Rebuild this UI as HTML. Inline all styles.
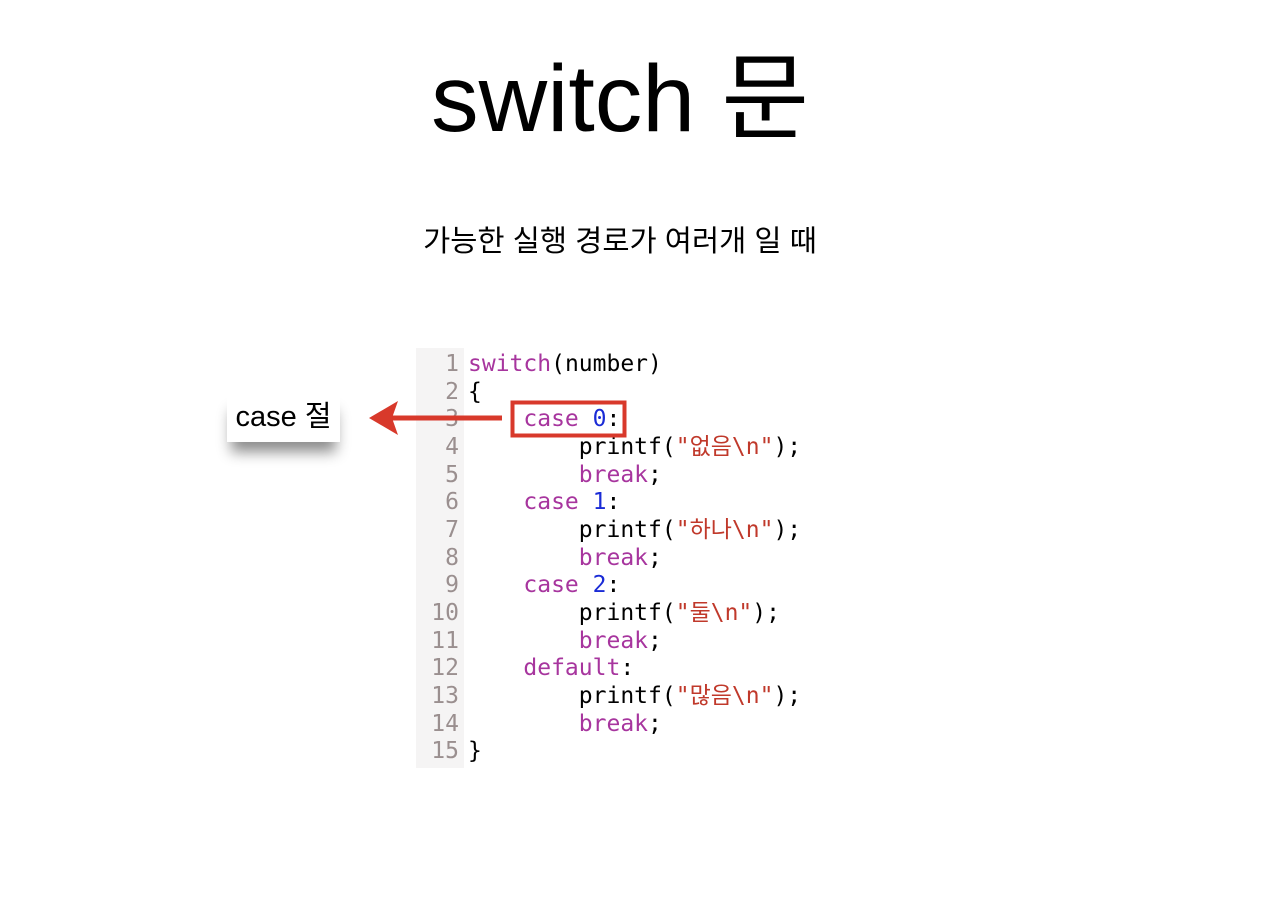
<!DOCTYPE html>
<html><head><meta charset="utf-8"><style>
body{margin:0;width:1280px;height:918px;background:#fff;position:relative;overflow:hidden;font-family:"Liberation Sans","Noto Sans CJK KR",sans-serif}
.t{position:absolute;left:0;width:1240px;text-align:center}
#title{top:44px;font-size:95px;line-height:110px;color:#000}
#sub{top:223px;font-size:29.5px;line-height:38px}
#gut{position:absolute;left:416px;top:348px;width:48px;height:420px;background:#f5f4f4}
pre{position:absolute;margin:0;top:351px;font-family:"DejaVu Sans Mono","Noto Sans CJK KR",monospace;font-size:23px;line-height:27.65px}
#ln{left:416px;width:43px;text-align:right;color:#9a8f8f}
#code{left:468px;color:#000}
.k{color:#a7359e}.n{color:#1a2bd6}.s{color:#c0392b}
#lab{position:absolute;left:227px;top:393px;width:113px;height:49px;background:#fff;box-shadow:0 14px 14px -4px rgba(0,0,0,.45);font-size:29px;line-height:49px;text-align:center}
</style></head><body>
<div class="t" id="title">switch 문</div>
<div class="t" id="sub">가능한 실행 경로가 여러개 일 때</div>
<div id="gut"></div>
<pre id="ln">1
2
3
4
5
6
7
8
9
10
11
12
13
14
15</pre>
<pre id="code"><span class="k">switch</span>(number)
{
    <span class="k">case</span> <span class="n">0</span>:
        printf(<span class="s">"없음\n"</span>);
        <span class="k">break</span>;
    <span class="k">case</span> <span class="n">1</span>:
        printf(<span class="s">"하나\n"</span>);
        <span class="k">break</span>;
    <span class="k">case</span> <span class="n">2</span>:
        printf(<span class="s">"둘\n"</span>);
        <span class="k">break</span>;
    <span class="k">default</span>:
        printf(<span class="s">"많음\n"</span>);
        <span class="k">break</span>;
}</pre>
<div id="lab">case 절</div>
<svg style="position:absolute;left:0;top:0" width="1280" height="918">
<rect x="512.5" y="402.5" width="112" height="33" fill="none" stroke="#d8392b" stroke-width="4"/>
<line x1="502" y1="418" x2="388" y2="418" stroke="#d8392b" stroke-width="5"/>
<polygon points="369,418 398,401 392,418 398,435" fill="#d8392b"/>
</svg>
</body></html>
